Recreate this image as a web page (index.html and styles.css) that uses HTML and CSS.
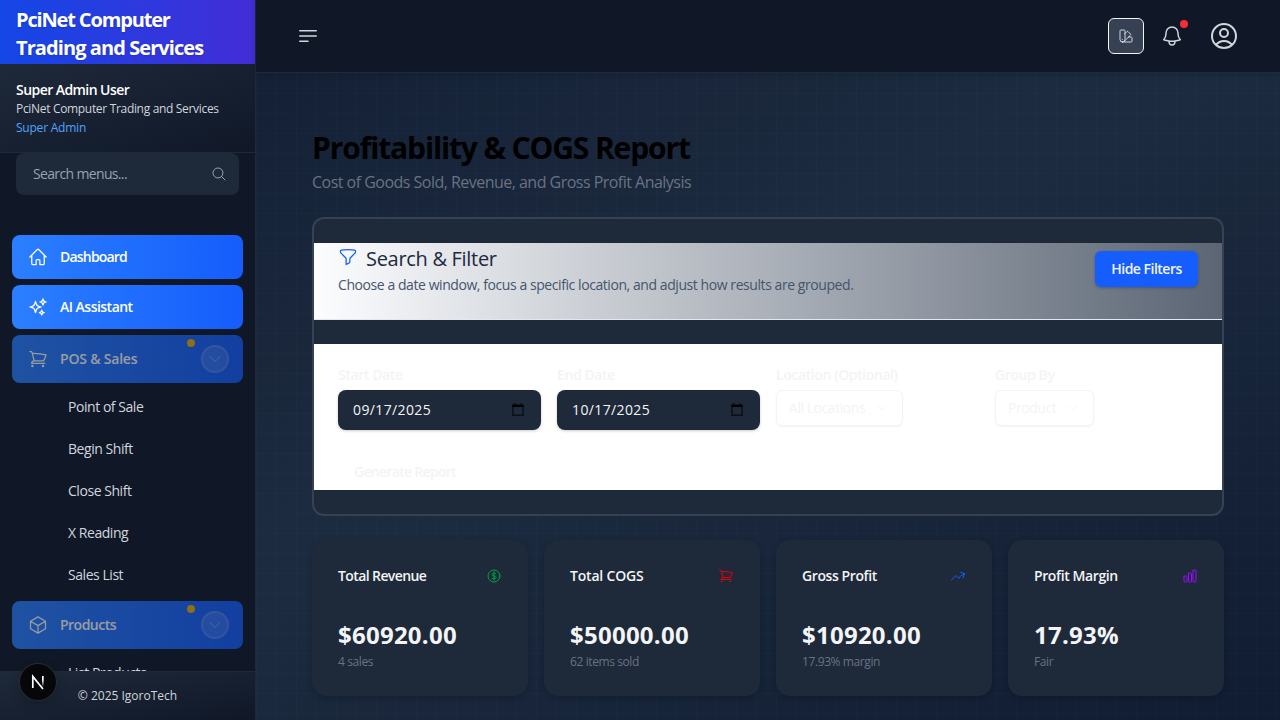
FILE: index.html
```html
<!DOCTYPE html>
<html lang="en">
<head>
<meta charset="utf-8">
<title>Profitability &amp; COGS Report</title>
<link rel="stylesheet" href="styles.css">
</head>
<body>
<svg class="defs" aria-hidden="true">
  <symbol id="chevron" viewBox="0 0 24 24"><path d="m19.5 8.25-7.5 7.5-7.5-7.5"/></symbol>
  <symbol id="cart" viewBox="0 0 24 24"><path d="M2.25 3h1.386c.51 0 .955.343 1.087.835l.383 1.437M7.5 14.25a3 3 0 0 0-3 3h15.75m-12.75-3h11.218c1.121-2.3 2.1-4.684 2.924-7.138a60.114 60.114 0 0 0-16.536-1.84M7.5 14.25 5.106 5.272M6 20.25a.75.75 0 1 1-1.5 0 .75.75 0 0 1 1.5 0Zm12.75 0a.75.75 0 1 1-1.5 0 .75.75 0 0 1 1.5 0Z"/></symbol>
  <symbol id="calendar" viewBox="0 0 16 16"><path d="M4.7 1.5v2M11.3 1.5v2" stroke="#000" stroke-width="1.4"/><path d="M2.9 3.5h10.2v9.8H2.9z" fill="none" stroke="#0b1017" stroke-width="1.4"/><path d="M2.3 2.7h11.4v2.3H2.3z" fill="#000"/></symbol>
</svg>
<div class="app">
  <aside class="sidebar">
    <div class="brand"><div class="brand-top">PciNet Computer</div><div>Trading and Services</div></div>
    <div class="user">
      <div class="user-name">Super Admin User</div>
      <div class="user-org">PciNet Computer Trading and Services</div>
      <div class="user-role">Super Admin</div>
    </div>
    <div class="search">
      <span>Search menus...</span>
      <svg class="icon icon-16" viewBox="0 0 24 24"><path d="m21 21-5.197-5.197m0 0A7.5 7.5 0 1 0 5.196 5.196a7.5 7.5 0 0 0 10.607 10.607Z"/></svg>
    </div>
    <nav class="nav">
      <a class="nav-item"><svg class="icon icon-20" viewBox="0 0 24 24"><path d="m2.25 12 8.954-8.955c.44-.439 1.152-.439 1.591 0L21.75 12M4.5 9.75v10.125c0 .621.504 1.125 1.125 1.125H9.75v-4.875c0-.621.504-1.125 1.125-1.125h2.25c.621 0 1.125.504 1.125 1.125V21h4.125c.621 0 1.125-.504 1.125-1.125V9.75"/></svg><span class="tight">Dashboard</span></a>
      <a class="nav-item"><svg class="icon icon-20" viewBox="0 0 24 24"><path d="M9.813 15.904 9 18.75l-.813-2.846a4.5 4.5 0 0 0-3.09-3.09L2.25 12l2.846-.813a4.5 4.5 0 0 0 3.09-3.09L9 5.25l.813 2.846a4.5 4.5 0 0 0 3.09 3.09L15.75 12l-2.846.813a4.5 4.5 0 0 0-3.09 3.09ZM18.259 8.715 18 9.75l-.259-1.035a3.375 3.375 0 0 0-2.455-2.456L14.25 6l1.036-.259a3.375 3.375 0 0 0 2.455-2.456L18 2.25l.259 1.035a3.375 3.375 0 0 0 2.456 2.456L21.75 6l-1.035.259a3.375 3.375 0 0 0-2.456 2.456ZM16.894 20.567 16.5 21.75l-.394-1.183a2.25 2.25 0 0 0-1.423-1.423L13.5 18.75l1.183-.394a2.25 2.25 0 0 0 1.423-1.423l.394-1.183.394 1.183a2.25 2.25 0 0 0 1.423 1.423l1.183.394-1.183.394a2.25 2.25 0 0 0-1.423 1.423Z"/></svg><span>AI Assistant</span></a>
      <a class="nav-item group"><svg class="icon icon-20"><use href="#cart"/></svg><span class="loose">POS &amp; Sales</span><i class="dot"></i><b class="toggle"><svg class="icon icon-16"><use href="#chevron"/></svg></b></a>
      <div class="sub">
        <a>Point of Sale</a><a>Begin Shift</a><a>Close Shift</a><a>X Reading</a><a>Sales List</a>
      </div>
      <a class="nav-item group"><svg class="icon icon-20" viewBox="0 0 24 24"><path d="m21 7.5-9-5.25L3 7.5m18 0-9 5.25m9-5.25v9l-9 5.25M3 7.5l9 5.25M3 7.5v9l9 5.25m0-9v9"/></svg><span>Products</span><i class="dot"></i><b class="toggle"><svg class="icon icon-16"><use href="#chevron"/></svg></b></a>
      <div class="sub"><a>List Products</a></div>
    </nav>
    <footer class="side-foot">© 2025 IgoroTech</footer>
  </aside>
  <div class="page">
    <header class="topbar">
      <svg class="icon icon-24" viewBox="0 0 24 24"><path d="M3.75 6.75h16.5M3.75 12h16.5m-16.5 5.25H12"/></svg>
      <div class="tools">
        <span class="swatch"><svg class="icon icon-16" viewBox="0 0 24 24"><path d="M4.098 19.902a3.75 3.75 0 0 0 5.304 0l6.401-6.402M6.75 21A3.75 3.75 0 0 1 3 17.25V4.125C3 3.504 3.504 3 4.125 3h5.25c.621 0 1.125.504 1.125 1.125v4.072M6.75 21a3.75 3.75 0 0 0 3.75-3.75V8.197M6.75 21h13.125c.621 0 1.125-.504 1.125-1.125v-5.25c0-.621-.504-1.125-1.125-1.125h-4.072M10.5 8.197l2.88-2.88c.438-.439 1.15-.439 1.59 0l3.712 3.713c.44.44.44 1.152 0 1.59l-2.879 2.88M6.75 17.25h.008v.008H6.75v-.008Z"/></svg></span>
        <span class="bell"><svg class="icon icon-24" viewBox="0 0 24 24"><path d="M14.857 17.082a23.848 23.848 0 0 0 5.454-1.31A8.967 8.967 0 0 1 18 9.75V9A6 6 0 0 0 6 9v.75a8.967 8.967 0 0 1-2.312 6.022c1.733.64 3.56 1.085 5.455 1.31m5.714 0a24.255 24.255 0 0 1-5.714 0m5.714 0a3 3 0 1 1-5.714 0"/></svg><i></i></span>
        <svg class="icon icon-32" viewBox="0 0 24 24"><path d="M17.982 18.725A7.488 7.488 0 0 0 12 15.75a7.488 7.488 0 0 0-5.982 2.975m11.963 0a9 9 0 1 0-11.963 0m11.963 0A8.966 8.966 0 0 1 12 21a8.966 8.966 0 0 1-5.982-2.275M15 9.75a3 3 0 1 1-6 0 3 3 0 0 1 6 0Z"/></svg>
      </div>
    </header>
    <main class="main">
      <h1>Profitability &amp; COGS Report</h1>
      <p class="lead">Cost of Goods Sold, Revenue, and Gross Profit Analysis</p>
      <section class="filter">
        <div class="filter-head">
          <div>
            <h2><svg class="icon icon-20" viewBox="0 0 24 24"><path d="M12 3c2.755 0 5.455.232 8.083.678.533.09.917.556.917 1.096v1.044a2.25 2.25 0 0 1-.659 1.591l-5.432 5.432a2.25 2.25 0 0 0-.659 1.591v2.927a2.25 2.25 0 0 1-1.244 2.013L9.75 21v-6.568a2.25 2.25 0 0 0-.659-1.591L3.659 7.409A2.25 2.25 0 0 1 3 5.818V4.774c0-.54.384-1.006.917-1.096A48.32 48.32 0 0 1 12 3Z"/></svg><span>Search &amp; Filter</span></h2>
            <p>Choose a date window, focus a specific location, and adjust how results are grouped.</p>
          </div>
          <button class="hide">Hide Filters</button>
        </div>
        <div class="filter-body">
          <div class="fields">
            <div><label>Start Date</label><div class="date"><span>09/17/2025</span><svg class="cal"><use href="#calendar"/></svg></div></div>
            <div><label>End Date</label><div class="date"><span>10/17/2025</span><svg class="cal"><use href="#calendar"/></svg></div></div>
            <div><label>Location (Optional)</label><div class="select"><span>All Locations</span><svg class="icon icon-14"><use href="#chevron"/></svg></div></div>
            <div><label>Group By</label><div class="select"><span>Product</span><svg class="icon icon-14"><use href="#chevron"/></svg></div></div>
          </div>
          <div class="generate">Generate Report</div>
        </div>
      </section>
      <section class="cards">
        <article class="card"><h3><span class="tight">Total Revenue</span><svg class="icon icon-16 green" viewBox="0 0 24 24"><path d="M12 6v12m-3-2.818.879.659c1.171.879 3.07.879 4.242 0 1.172-.879 1.172-2.303 0-3.182C13.536 12.219 12.768 12 12 12c-.725 0-1.45-.22-2.003-.659-1.106-.879-1.106-2.303 0-3.182s2.9-.879 4.006 0l.415.33M21 12a9 9 0 1 1-18 0 9 9 0 0 1 18 0Z"/></svg></h3><strong>$60920.00</strong><small>4 sales</small></article>
        <article class="card"><h3><span class="loose">Total COGS</span><svg class="icon icon-16 red"><use href="#cart"/></svg></h3><strong>$50000.00</strong><small>62 items sold</small></article>
        <article class="card"><h3>Gross Profit<svg class="icon icon-16 blue" viewBox="0 0 24 24"><path d="M2.25 18 9 11.25l4.306 4.306a11.95 11.95 0 0 1 5.814-5.518l2.74-1.22m0 0-5.94-2.281m5.94 2.28-2.28 5.941"/></svg></h3><strong>$10920.00</strong><small>17.93% margin</small></article>
        <article class="card"><h3>Profit Margin<svg class="icon icon-16 purple" viewBox="0 0 24 24"><path d="M3 13.125C3 12.504 3.504 12 4.125 12h2.25c.621 0 1.125.504 1.125 1.125v6.75C7.5 20.496 6.996 21 6.375 21h-2.25A1.125 1.125 0 0 1 3 19.875v-6.75ZM9.75 8.625c0-.621.504-1.125 1.125-1.125h2.25c.621 0 1.125.504 1.125 1.125v11.25c0 .621-.504 1.125-1.125 1.125h-2.25a1.125 1.125 0 0 1-1.125-1.125V8.625ZM16.5 4.125c0-.621.504-1.125 1.125-1.125h2.25C20.496 3 21 3.504 21 4.125v15.75c0 .621-.504 1.125-1.125 1.125h-2.25a1.125 1.125 0 0 1-1.125-1.125V4.125Z"/></svg></h3><strong>17.93%</strong><small>Fair</small></article>
      </section>
    </main>
  </div>
  <div class="dev-badge"><svg viewBox="0 0 36 36"><defs><linearGradient id="fade" x1="0" y1="0" x2="0" y2="1"><stop offset=".35" stop-color="#fff"/><stop offset="1" stop-color="#fff" stop-opacity="0"/></linearGradient></defs><path d="M12.8 24V12.5L23 25" fill="none" stroke="#fff" stroke-width="1.7"/><path d="M22 12h1.7v11H22z" fill="url(#fade)"/></svg></div>
</div>
</body>
</html>
```
FILE: styles.css
```css
* { box-sizing: border-box; margin: 0; padding: 0; }
body { width: 1280px; height: 720px; overflow: hidden; font: 14px/20px "Open Sans", "Noto Sans", sans-serif; letter-spacing: -0.45px; color: #d1d5dc; background: #101828; }
.defs { position: absolute; width: 0; height: 0; }
.icon { fill: none; stroke: currentColor; stroke-width: 1.5; stroke-linecap: round; stroke-linejoin: round; flex: none; display: block; }
.icon-14 { width: 14px; height: 14px; }
.icon-16 { width: 16px; height: 16px; }
.icon-20 { width: 20px; height: 20px; }
.icon-24 { width: 24px; height: 24px; }
.icon-32 { width: 32px; height: 32px; }
.app { position: relative; display: flex; width: 1280px; height: 720px; background: linear-gradient(to bottom right, #0f172a, #1e293b 50%, #0f172a); }

.sidebar { width: 256px; height: 720px; flex: none; display: flex; flex-direction: column; background: #101828; border-right: 1px solid #1e2939; }
.brand { height: 64px; flex: none; padding: 6px 16px; font-size: 20px; line-height: 28px; font-weight: 700; letter-spacing: -0.92px; color: #fff; background: linear-gradient(90deg, #1447e6, #432dd7); text-shadow: 0 1px 2px rgba(0,0,0,.15); }
.brand-top { letter-spacing: -1.15px; }
.user { height: 89px; flex: none; padding: 16px; background: linear-gradient(to bottom right, #1e2939, #101828); border-bottom: 1px solid #1e2939; }
.user-name { font-weight: 600; color: #fff; letter-spacing: -0.56px; }
.user-org { font-size: 12px; line-height: 17px; letter-spacing: -0.32px; }
.user-role { font-size: 12px; line-height: 16px; margin-top: 3px; color: #51a2ff; letter-spacing: -0.22px; }
.search { height: 42px; flex: none; margin: 0 16px; padding: 0 12px 0 17px; display: flex; align-items: center; justify-content: space-between; border-radius: 8px; background: #1e2939; color: #99a1af; letter-spacing: -0.65px; }
.nav { flex: 1; min-height: 0; overflow: hidden; padding: 40px 12px 0; display: flex; flex-direction: column; }
.nav-item { height: 44px; flex: none; margin-bottom: 6px; padding: 0 14px 0 16px; display: flex; align-items: center; gap: 12px; border-radius: 8px; background: linear-gradient(90deg, #2b7fff, #155dfc); color: #fff; font-weight: 600; letter-spacing: -0.52px; }
.nav-item .tight { letter-spacing: -0.8px; }
.nav-item .loose { letter-spacing: -0.2px; }
.group { height: 48px; margin-bottom: 3px; position: relative; opacity: .57; }
.dot { position: absolute; left: 175px; top: 4px; width: 8px; height: 8px; border-radius: 50%; background: #f0b100; }
.toggle { margin-left: auto; width: 28px; height: 28px; border: 2px solid rgba(255,255,255,.12); border-radius: 50%; background: rgba(255,255,255,.12); display: grid; place-items: center; color: rgba(255,255,255,.35); }
.sub { flex: none; margin-bottom: 5px; }
.sub a { display: block; height: 42px; line-height: 42px; padding-left: 56px; }
.side-foot { height: 49px; flex: none; border-top: 1px solid #1e2939; background: linear-gradient(to bottom right, #1e2939, #101828); text-align: center; font-size: 12px; line-height: 48px; letter-spacing: 0; }
.dev-badge { position: absolute; left: 20px; top: 664px; width: 36px; height: 36px; border-radius: 50%; background: #060709; box-shadow: 0 0 0 1px #2b2b2d, 0 4px 12px rgba(0,0,0,.2); }
.dev-badge svg { display: block; width: 36px; height: 36px; }

.page { flex: 1; min-width: 0; display: flex; flex-direction: column; }
.topbar { height: 73px; flex: none; padding: 0 40px; display: flex; align-items: center; justify-content: space-between; background: #101828; border-bottom: 1px solid #1e2939; box-shadow: 0 1px 6px rgba(0,0,0,.2); position: relative; }
.tools { display: flex; align-items: center; }
.swatch { width: 36px; height: 36px; border: 1px solid #f3f4f6; border-radius: 6px; background: #364153; display: grid; place-items: center; margin-right: 16px; }
.bell { position: relative; margin-right: 24px; }
.bell i { position: absolute; left: 20px; top: -4px; width: 8px; height: 8px; border-radius: 50%; background: #fb2c36; }
.main { flex: 1; padding: 56px 56px 0; background-color: rgba(30,58,95,.15); background-image: linear-gradient(rgba(59,130,246,.035) 1px, transparent 1px), linear-gradient(90deg, rgba(59,130,246,.035) 1px, transparent 1px); background-size: 20px 20px; }
h1 { font-size: 30px; line-height: 36px; font-weight: 700; letter-spacing: -1.13px; color: #000; padding-top: 1px; }
.lead { margin-top: 4px; font-size: 16px; line-height: 24px; letter-spacing: -0.52px; color: #6a7282; white-space: nowrap; }
.filter { margin-top: 23px; height: 299px; border: 2px solid #364153; border-radius: 12px; background: #1e2939; padding: 24px 0; }
.filter-head { height: 77px; padding: 0 24px; display: flex; justify-content: space-between; border-bottom: 1px solid #e2e8f0; background: linear-gradient(90deg, #fcfdff, #5b6574); }
h2 { display: flex; gap: 8px; font-size: 20px; line-height: 32px; font-weight: 500; letter-spacing: -0.3px; color: #1d293d; }
h2 .icon { color: #155dfc; margin-top: 4px; }
.filter-head p { line-height: 20px; color: #45556c; letter-spacing: -0.43px; white-space: nowrap; }
.hide { margin-top: 8px; width: 103px; height: 36px; border: 0; border-radius: 6px; background: #155dfc; color: #f3f4f6; font: inherit; font-weight: 600; letter-spacing: -0.5px; box-shadow: 0 1px 3px rgba(0,0,0,.25); }
.filter-body { margin-top: 24px; height: 146px; padding: 21px 24px 0; background: #fff; color: #f3f4f6; }
.fields { display: grid; grid-template-columns: repeat(4, 1fr); gap: 16px; }
label { display: block; font-weight: 600; letter-spacing: -0.4px; }
.date { margin-top: 5px; height: 40px; border-radius: 8px; padding: 0 15px; display: flex; align-items: center; justify-content: space-between; background: #1e2939; box-shadow: 0 1px 3px rgba(0,0,0,.2); letter-spacing: 0.38px; }
.cal { width: 16px; height: 16px; }
.select { margin-top: 5px; width: max-content; height: 36px; border: 1px solid #f3f4f6; border-radius: 6px; padding: 0 13px 0 12px; display: flex; align-items: center; gap: 10px; box-shadow: 0 1px 2px rgba(0,0,0,.05); }
.generate { margin: 32px 0 0 16px; font-weight: 600; letter-spacing: -0.7px; }
.cards { margin-top: 24px; display: grid; grid-template-columns: repeat(4, 1fr); gap: 16px; }
.card { height: 156px; padding: 26px; border-radius: 14px; background: #1e2939; box-shadow: 0 2px 6px rgba(0,0,0,.2); color: #f3f4f6; }
h3 { display: flex; align-items: center; justify-content: space-between; font-size: 14px; line-height: 20px; font-weight: 600; letter-spacing: -0.4px; }
h3 .tight { letter-spacing: -0.6px; }
h3 .loose { letter-spacing: -0.2px; }
.card strong { display: block; margin-top: 33px; font-size: 24px; line-height: 32px; letter-spacing: 0.25px; }
.card small { display: block; margin-top: 3px; font-size: 12px; line-height: 16px; letter-spacing: -0.4px; color: #6a7282; }
.green { color: #00a63e; }
.red { color: #e7000b; }
.blue { color: #155dfc; }
.purple { color: #9810fa; }
```
